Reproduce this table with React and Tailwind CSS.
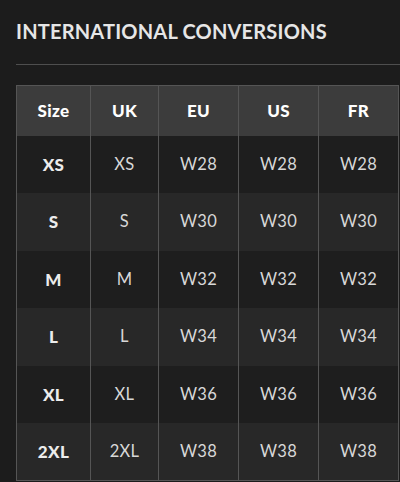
const columns = ["Size", "UK", "EU", "US", "FR"];

const rows = [
  ["XS", "XS", "W28", "W28", "W28"],
  ["S", "S", "W30", "W30", "W30"],
  ["M", "M", "W32", "W32", "W32"],
  ["L", "L", "W34", "W34", "W34"],
  ["XL", "XL", "W36", "W36", "W36"],
  ["2XL", "2XL", "W38", "W38", "W38"],
];

const widths = ["w-[74px]", "w-[68px]", "w-[80px]", "w-[80px]", "w-[80px]"];

export default function App() {
  return (
    <div
      className="w-[400px] h-[482px] overflow-hidden bg-[#1c1c1c] pl-4"
      style={{ fontFamily: "Lato, 'Noto Sans', sans-serif" }}
    >
      <h2 className="pt-[19px] h-[64px] text-[20px] leading-[24px] font-bold tracking-[0.01em] text-[#e6e6e6] whitespace-nowrap">
        INTERNATIONAL CONVERSIONS
      </h2>
      <div className="h-px bg-[#4e4e4e] w-[400px]" />

      <table className="mt-[20px] w-[383px] table-fixed border-collapse border border-[#555]">
        <thead>
          <tr className="bg-[#3c3c3c] h-[50px]">
            {columns.map((c, i) => (
              <th
                key={c}
                className={`${widths[i]} border-x border-[#555] text-center text-[17px] font-black tracking-[0.02em] text-white`}
              >
                {c}
              </th>
            ))}
          </tr>
        </thead>
        <tbody>
          {rows.map((r, ri) => (
            <tr
              key={r[0]}
              className={`h-[57.5px] ${ri % 2 === 0 ? "bg-[#1e1e1e]" : "bg-[#282828]"}`}
            >
              {r.map((v, ci) => (
                <td
                  key={ci}
                  className={`border-x border-[#555] text-center tracking-[0.02em] ${
                    ci === 0
                      ? "text-[17px] font-black text-[#ececec]"
                      : "text-[16.5px] font-normal text-[#d8d8d8]"
                  }`}
                >
                  {v}
                </td>
              ))}
            </tr>
          ))}
        </tbody>
      </table>
    </div>
  );
}
